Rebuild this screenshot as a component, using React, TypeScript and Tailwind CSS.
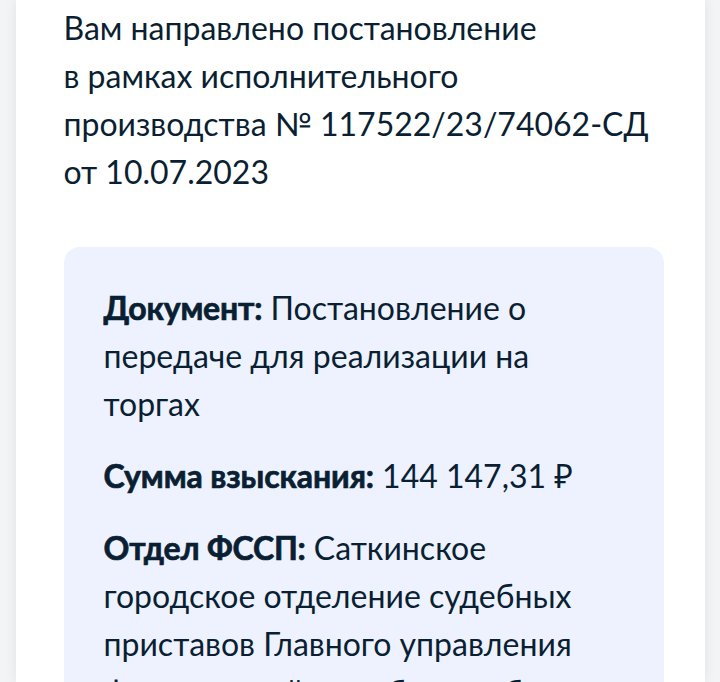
export default function App() {
  return (
    <div className="w-[720px] h-[682px] overflow-hidden bg-[#f3f4f6] flex justify-center" style={{ fontFamily: "Lato, 'Noto Sans', sans-serif" }}>
      <div className="w-[689px] bg-white shadow-[0_0_12px_rgba(0,0,0,0.08)] pl-[48px] pr-[40px] pt-[4px] text-[#0b1f33] text-[32px] leading-[48px]">
        <p className="whitespace-nowrap">
          Вам направлено постановление
          <br />в рамках исполнительного
          <br />производства № 117522/23/74062-СД
          <br />от 10.07.2023
        </p>
        <div className="mt-[51px] bg-[#edf2fe] rounded-[16px] w-[600px] pl-[40px] pr-[30px] pt-[37px] pb-[40px] flex flex-col gap-[24px]">
          <p className="whitespace-nowrap">
            <span className="font-bold tracking-[-0.2px] [-webkit-text-stroke:0.7px_#0b1f33]">Документ:</span> Постановление о
            <br />передаче для реализации на
            <br />торгах
          </p>
          <p className="whitespace-nowrap">
            <span className="font-bold tracking-[-0.1px] [-webkit-text-stroke:0.7px_#0b1f33]">Сумма взыскания:</span> 144 147,31 ₽
          </p>
          <p className="whitespace-nowrap">
            <span className="font-bold tracking-[-0.2px] [-webkit-text-stroke:0.7px_#0b1f33]">Отдел ФССП:</span> Саткинское
            <br />городское отделение судебных
            <br />приставов Главного управления
            <br />Федеральной службы судебных
            <br />приставов по Челябинской
            <br />области
          </p>
        </div>
      </div>
    </div>
  );
}
